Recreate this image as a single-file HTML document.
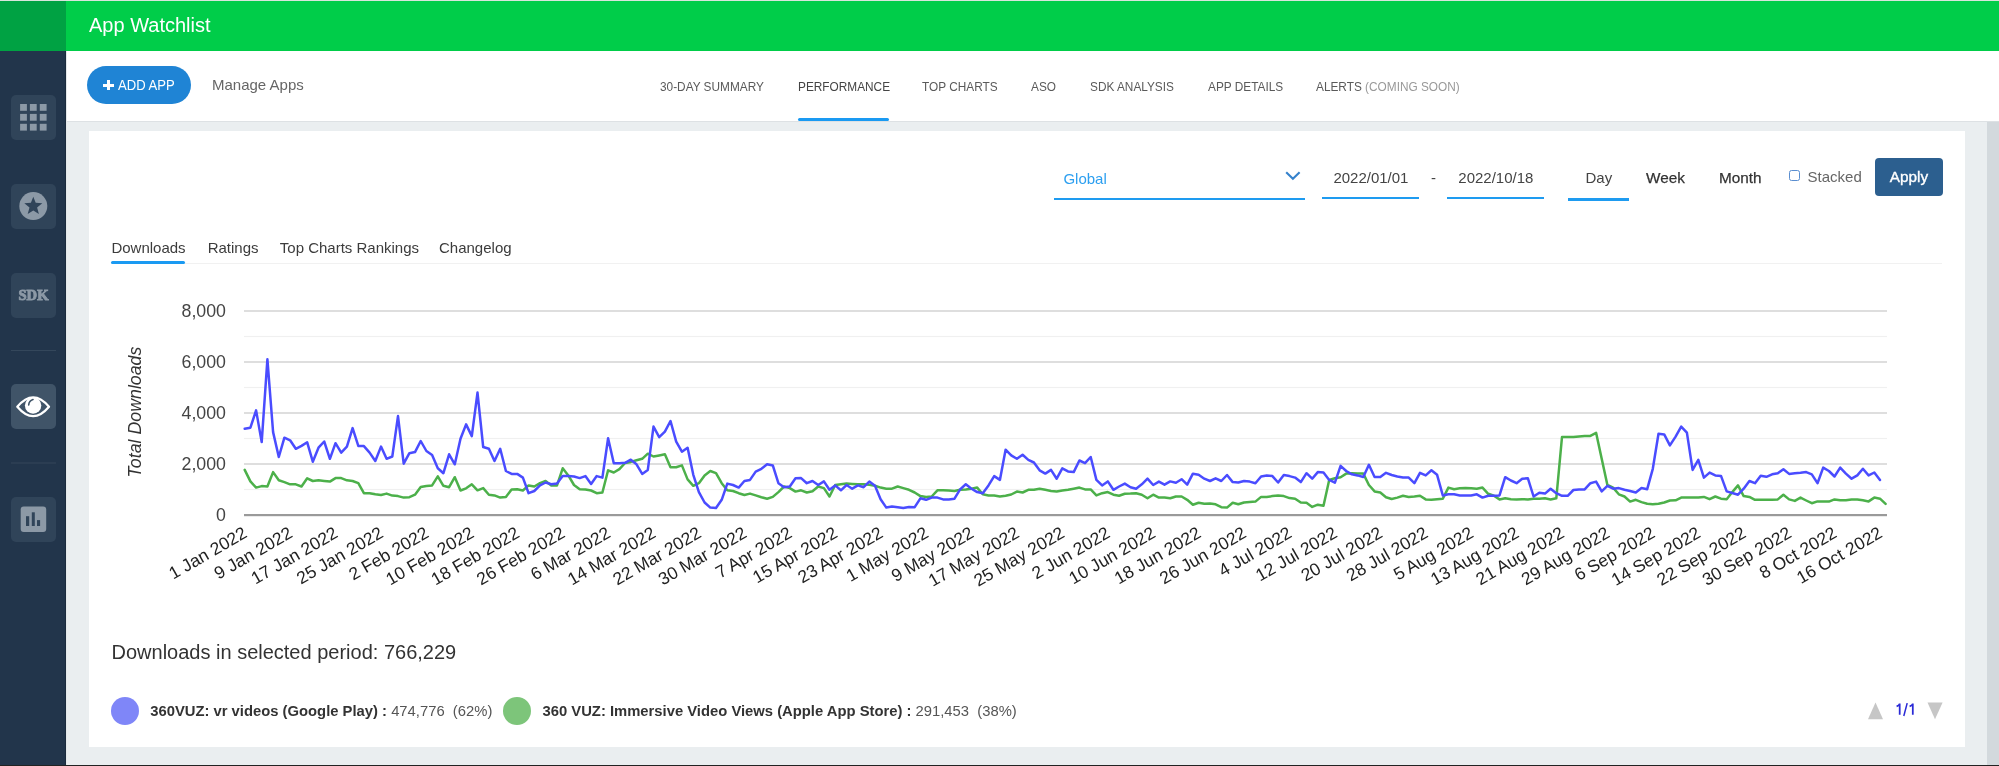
<!DOCTYPE html>
<html><head><meta charset="utf-8">
<style>
html,body{margin:0;padding:0}
body{width:1999px;height:766px;overflow:hidden;position:relative;will-change:transform;background:#eaeef0;font-family:"Liberation Sans",sans-serif;color:#333}
.a{position:absolute}
.t{position:absolute;line-height:1;white-space:nowrap}
.nv{transform:scaleX(0.91);transform-origin:0 0}
</style></head><body>
<!-- top line and header -->
<div class="a" style="left:0;top:0;width:1999px;height:1px;background:#d9e5dc"></div>
<div class="a" style="left:0;top:1px;width:66px;height:50px;background:#00a243"></div>
<div class="a" style="left:66px;top:1px;width:1933px;height:50px;background:#00cd49"></div>
<div class="t" style="left:89px;top:15px;font-size:20px;color:#fff">App Watchlist</div>
<!-- sidebar -->
<div class="a" style="left:0;top:51px;width:66px;height:715px;background:#22354b"></div>
<div class="a" style="left:65px;top:51px;width:1px;height:715px;background:#1b2b3d"></div>
<!-- nav bar -->
<div class="a" style="left:66px;top:51px;width:1933px;height:70px;background:#fff"></div>
<div class="a" style="left:66px;top:121px;width:1933px;height:1px;background:#dde1e4"></div>
<div class="a" style="left:66px;top:51px;width:1px;height:715px;background:#e4e8ea"></div>
<!-- scrollbar -->
<div class="a" style="left:1987px;top:122px;width:12px;height:644px;background:#d3d9dd"></div>
<div class="a" style="left:0;top:765px;width:1999px;height:1px;background:#222"></div>
<!-- card -->
<div class="a" style="left:89px;top:131px;width:1876px;height:616px;background:#fff"></div>

<!-- sidebar icons -->
<svg class="a" style="left:0;top:0" width="66" height="766">
  <rect x="11" y="95" width="45" height="45" rx="5" fill="#304459"/>
  <g fill="#8c99a6">
    <rect x="20.1" y="104" width="6.8" height="6.8"/><rect x="29.9" y="104" width="6.8" height="6.8"/><rect x="39.8" y="104" width="6.8" height="6.8"/>
    <rect x="20.1" y="113.9" width="6.8" height="6.8"/><rect x="29.9" y="113.9" width="6.8" height="6.8"/><rect x="39.8" y="113.9" width="6.8" height="6.8"/>
    <rect x="20.1" y="123.8" width="6.8" height="6.8"/><rect x="29.9" y="123.8" width="6.8" height="6.8"/><rect x="39.8" y="123.8" width="6.8" height="6.8"/>
  </g>
  <rect x="11" y="184" width="45" height="45" rx="5" fill="#304459"/>
  <circle cx="33.3" cy="206.1" r="14" fill="#8c99a6"/>
  <polygon fill="#304459" points="33.3,196.7 35.7,202.8 42.3,203.3 37.1,207.6 38.9,214.1 33.3,210.4 27.7,214.1 29.5,207.6 24.3,203.3 30.9,202.8"/>
  <rect x="11" y="273" width="45" height="45" rx="5" fill="#304459"/>
  <text x="33.5" y="299.7" text-anchor="middle" font-family="Liberation Serif" font-weight="bold" font-size="14.5" fill="#8c99a6" stroke="#8c99a6" stroke-width="0.9" textLength="30" lengthAdjust="spacingAndGlyphs">SDK</text>
  <rect x="11" y="350" width="45" height="1" fill="#34475b"/>
  <rect x="11" y="384" width="45" height="45" rx="5" fill="#405468"/>
  <path d="M17.3,406.8 Q33.2,388 49,406.8 Q33.2,425.6 17.3,406.8 Z" fill="none" stroke="#fff" stroke-width="2.3" stroke-linejoin="round"/>
  <circle cx="33.1" cy="405.5" r="8.2" fill="#fff"/>
  <path d="M28.7,405 Q29,400.8 33,399.6" fill="none" stroke="#405468" stroke-width="1.6" stroke-linecap="round"/>
  <rect x="11" y="462.5" width="45" height="1" fill="#34475b"/>
  <rect x="11" y="497" width="45" height="45" rx="5" fill="#304459"/>
  <rect x="20.7" y="506.4" width="25.5" height="25.5" rx="3" fill="#8c99a6"/>
  <g fill="#304459"><rect x="26" y="516.2" width="3.2" height="9.8"/><rect x="31.8" y="512.3" width="3" height="13.7"/><rect x="37" y="520.1" width="3.1" height="5.9"/></g>
</svg>

<!-- nav -->
<div class="a" style="left:87px;top:66px;width:104px;height:37.5px;border-radius:19px;background:#1f84d5"></div>
<div class="a" style="left:103px;top:83.7px;width:10.8px;height:3px;background:#fff"></div>
<div class="a" style="left:106.9px;top:80px;width:3px;height:10.4px;background:#fff"></div>
<div class="t" style="left:118.3px;top:78.3px;font-size:14px;color:#fff;transform:scaleX(0.935);transform-origin:0 0">ADD APP</div>
<div class="t" style="left:212px;top:76.9px;font-size:15px;color:#666">Manage Apps</div>

<div class="t nv" style="left:660px;top:80.4px;font-size:13px;color:#5a5a5a">30-DAY SUMMARY</div>
<div class="t nv" style="left:798px;top:80.4px;font-size:13px;color:#444">PERFORMANCE</div>
<div class="a" style="left:798px;top:118px;width:91px;height:3px;border-radius:1.5px;background:#1a9af2"></div>
<div class="t nv" style="left:922.4px;top:80.4px;font-size:13px;color:#5a5a5a">TOP CHARTS</div>
<div class="t nv" style="left:1031px;top:80.4px;font-size:13px;color:#5a5a5a">ASO</div>
<div class="t nv" style="left:1089.5px;top:80.4px;font-size:13px;color:#5a5a5a">SDK ANALYSIS</div>
<div class="t nv" style="left:1208px;top:80.4px;font-size:13px;color:#5a5a5a">APP DETAILS</div>
<div class="t nv" style="left:1316px;top:80.4px;font-size:13px;color:#5a5a5a">ALERTS <span style="color:#999">(COMING SOON)</span></div>

<!-- filter row -->
<div class="t" style="left:1063.4px;top:171.2px;font-size:15px;color:#2c9ff0">Global</div>
<div class="a" style="left:1054px;top:198px;width:251px;height:2px;background:#1e9bf0"></div>
<svg class="a" style="left:1284px;top:168px" width="18" height="16"><path d="M2.2,4.2 L8.9,10.8 L15.6,4.2" fill="none" stroke="#3582cc" stroke-width="2.1"/></svg>
<div class="t" style="left:1333.4px;top:170.3px;font-size:15px;color:#444">2022/01/01</div>
<div class="a" style="left:1322px;top:197px;width:97px;height:2px;background:#1e9bf0"></div>
<div class="t" style="left:1431px;top:170px;font-size:15px;color:#444">-</div>
<div class="t" style="left:1458.3px;top:170.3px;font-size:15px;color:#444">2022/10/18</div>
<div class="a" style="left:1447px;top:197px;width:97px;height:2px;background:#1e9bf0"></div>
<div class="t" style="left:1585.5px;top:170.4px;font-size:15px;color:#444">Day</div>
<div class="a" style="left:1568px;top:198px;width:61px;height:2.5px;background:#1e9bf0"></div>
<div class="t" style="left:1646px;top:170.4px;font-size:15.3px;color:#333;-webkit-text-stroke:0.25px #333">Week</div>
<div class="t" style="left:1719px;top:170.4px;font-size:15.3px;color:#333;-webkit-text-stroke:0.25px #333">Month</div>
<div class="a" style="left:1789px;top:170.4px;width:8.7px;height:8.5px;border:1.5px solid #5a8ed0;border-radius:2.5px"></div>
<div class="t" style="left:1807.6px;top:169.3px;font-size:15px;color:#666">Stacked</div>
<div class="a" style="left:1875px;top:158px;width:68px;height:38px;border-radius:4px;background:#2c5f8f"></div>
<div class="t" style="left:1889.8px;top:168.8px;font-size:15.3px;color:#fff;-webkit-text-stroke:0.35px #fff">Apply</div>

<!-- chart tabs -->
<div class="t" style="left:111.4px;top:240.4px;font-size:15px;color:#3c3c3c">Downloads</div>
<div class="t" style="left:207.7px;top:240.4px;font-size:15px;color:#3c3c3c">Ratings</div>
<div class="t" style="left:279.8px;top:240.4px;font-size:15px;color:#3c3c3c">Top Charts Rankings</div>
<div class="t" style="left:439px;top:240.4px;font-size:15px;color:#3c3c3c">Changelog</div>
<div class="a" style="left:111px;top:263px;width:1831px;height:1px;background:#f1f1f1"></div>
<div class="a" style="left:111px;top:260.5px;width:74px;height:3px;border-radius:1.5px;background:#1a9af2"></div>

<!-- chart -->
<svg class="a" style="left:0;top:0" width="1999" height="766" font-family="Liberation Sans">
<rect x="244" y="335.9" width="1643" height="1.2" fill="#f0f0f0"/>
<rect x="244" y="386.9" width="1643" height="1.2" fill="#f0f0f0"/>
<rect x="244" y="437.9" width="1643" height="1.2" fill="#f0f0f0"/>
<rect x="244" y="488.9" width="1643" height="1.2" fill="#f0f0f0"/>
<rect x="244" y="310.0" width="1643" height="2" fill="#dedede"/>
<rect x="244" y="361.0" width="1643" height="2" fill="#dedede"/>
<rect x="244" y="412.0" width="1643" height="2" fill="#dedede"/>
<rect x="244" y="463.0" width="1643" height="2" fill="#dedede"/>
<rect x="244" y="514" width="1643" height="2.2" fill="#9a9a9a"/>
<g font-size="17.8" fill="#444">
<text x="226" y="317.3" text-anchor="end">8,000</text>
<text x="226" y="368.3" text-anchor="end">6,000</text>
<text x="226" y="419.3" text-anchor="end">4,000</text>
<text x="226" y="470.3" text-anchor="end">2,000</text>
<text x="226" y="521.3" text-anchor="end">0</text>
</g>
<text transform="translate(140.5,412) rotate(-90)" text-anchor="middle" font-size="17.8" font-style="italic" fill="#333">Total Downloads</text>
<polyline points="244.7,469.9 250.4,481.4 256.1,487.6 261.7,486.1 267.4,486.5 273.1,472.1 278.8,480.3 284.4,482.1 290.1,484.3 295.8,484.3 301.5,486.5 307.2,478.3 312.8,481.0 318.5,480.3 324.2,481.0 329.9,481.6 335.5,478.1 341.2,478.1 346.9,480.3 352.6,481.0 358.3,483.2 363.9,493.2 369.6,493.2 375.3,494.3 381.0,495.0 386.6,493.6 392.3,495.6 398.0,496.1 403.7,497.6 409.4,497.2 415.0,494.7 420.7,487.0 426.4,485.9 432.1,485.4 437.8,476.3 443.4,485.8 449.1,487.2 454.8,477.2 460.5,490.5 466.1,488.3 471.8,484.3 477.5,490.3 483.2,488.1 488.9,494.7 494.5,495.4 500.2,497.6 505.9,496.9 511.6,489.4 517.2,489.2 522.9,490.5 528.6,485.4 534.3,486.5 540.0,483.2 545.6,481.0 551.3,485.4 557.0,485.4 562.7,468.3 568.3,475.4 574.0,485.0 579.7,489.2 585.4,489.4 591.1,490.5 596.7,493.2 602.4,492.5 608.1,470.3 613.8,472.5 619.4,469.2 625.1,463.0 630.8,461.9 636.5,460.3 642.2,458.8 647.8,453.7 653.5,456.5 659.2,455.4 664.9,454.3 670.5,467.2 676.2,467.2 681.9,465.4 687.6,479.4 693.3,485.8 698.9,483.2 704.6,475.4 710.3,471.0 716.0,473.2 721.7,483.2 727.3,490.3 733.0,491.0 738.7,493.2 744.4,495.0 750.0,493.6 755.7,495.4 761.4,497.2 767.1,498.7 772.8,496.9 778.4,492.1 784.1,486.5 789.8,488.1 795.5,491.6 801.1,490.3 806.8,492.5 812.5,491.2 818.2,486.5 823.9,488.1 829.5,496.5 835.2,485.0 840.9,484.3 846.6,483.6 852.2,483.9 857.9,484.3 863.6,484.3 869.3,484.7 875.0,485.8 880.6,487.6 886.3,488.7 892.0,488.7 897.7,486.5 903.3,488.1 909.0,489.8 914.7,492.5 920.4,496.1 926.1,496.9 931.7,496.5 937.4,490.3 943.1,490.3 948.8,490.5 954.5,491.0 960.1,489.8 965.8,489.4 971.5,488.7 977.2,487.6 982.8,494.3 988.5,495.4 994.2,495.4 999.9,496.5 1005.6,495.8 1011.2,494.5 1016.9,491.6 1022.6,492.5 1028.3,489.8 1033.9,489.8 1039.6,488.7 1045.3,489.8 1051.0,491.0 1056.7,491.6 1062.3,490.5 1068.0,489.8 1073.7,488.7 1079.4,487.6 1085.0,489.4 1090.7,489.4 1096.4,495.4 1102.1,493.2 1107.8,492.1 1113.4,494.7 1119.1,495.8 1124.8,493.8 1130.5,493.6 1136.1,493.2 1141.8,494.7 1147.5,498.3 1153.2,494.7 1158.9,497.6 1164.5,497.6 1170.2,498.3 1175.9,496.5 1181.6,496.5 1187.2,499.8 1192.9,504.7 1198.6,502.7 1204.3,503.8 1210.0,503.6 1215.6,504.3 1221.3,507.2 1227.0,507.6 1232.7,502.7 1238.3,504.3 1244.0,502.5 1249.7,502.1 1255.4,501.6 1261.1,496.9 1266.7,496.9 1272.4,496.1 1278.1,495.4 1283.8,496.1 1289.5,498.1 1295.1,498.7 1300.8,502.5 1306.5,502.7 1312.2,506.9 1317.8,504.7 1323.5,505.8 1329.2,479.9 1334.9,478.3 1340.6,477.2 1346.2,473.6 1351.9,473.2 1357.6,473.6 1363.3,473.6 1368.9,485.0 1374.6,491.4 1380.3,492.5 1386.0,497.2 1391.7,499.0 1397.3,497.6 1403.0,495.8 1408.7,496.9 1414.4,496.5 1420.0,495.8 1425.7,499.4 1431.4,499.8 1437.1,499.2 1442.8,498.7 1448.4,487.6 1454.1,489.2 1459.8,488.3 1465.5,488.1 1471.1,488.3 1476.8,488.7 1482.5,487.6 1488.2,493.8 1493.9,495.8 1499.5,499.4 1505.2,498.3 1510.9,499.2 1516.6,499.4 1522.2,499.2 1527.9,499.4 1533.6,498.7 1539.3,498.7 1545.0,498.3 1550.6,499.4 1556.3,498.3 1562.0,437.0 1567.7,437.0 1573.4,437.0 1579.0,436.6 1584.7,436.1 1590.4,435.9 1596.1,432.8 1601.7,458.8 1607.4,485.0 1613.1,487.6 1618.8,494.3 1624.5,496.5 1630.1,501.6 1635.8,499.8 1641.5,502.1 1647.2,503.8 1652.8,504.3 1658.5,503.8 1664.2,502.5 1669.9,500.5 1675.6,500.3 1681.2,497.6 1686.9,497.6 1692.6,497.6 1698.3,497.6 1703.9,496.9 1709.6,499.2 1715.3,496.5 1721.0,498.7 1726.7,499.2 1732.3,492.1 1738.0,485.4 1743.7,496.1 1749.4,496.9 1755.0,499.8 1760.7,499.8 1766.4,499.8 1772.1,499.8 1777.8,499.4 1783.4,494.7 1789.1,499.4 1794.8,500.9 1800.5,497.6 1806.2,500.5 1811.8,503.2 1817.5,501.4 1823.2,501.6 1828.9,501.6 1834.5,499.4 1840.2,500.3 1845.9,500.3 1851.6,499.4 1857.3,499.4 1862.9,500.3 1868.6,501.4 1874.3,497.6 1880.0,498.7 1885.6,503.8" fill="none" stroke="#4cb04a" stroke-width="2.5" stroke-linejoin="round" stroke-linecap="round"/>
<polyline points="244.7,428.8 250.4,427.7 256.1,410.4 261.7,442.1 267.4,359.3 273.1,432.1 278.8,457.0 284.4,437.7 290.1,440.3 295.8,448.8 301.5,445.9 307.2,442.3 312.8,461.7 318.5,447.7 324.2,441.5 329.9,458.8 335.5,443.2 341.2,452.6 346.9,446.6 352.6,428.1 358.3,445.9 363.9,446.1 369.6,452.6 375.3,461.0 381.0,446.6 386.6,458.8 392.3,456.5 398.0,416.1 403.7,463.7 409.4,453.2 415.0,452.1 420.7,441.0 426.4,451.0 432.1,455.0 437.8,468.2 443.4,473.2 449.1,454.3 454.8,464.3 460.5,438.8 466.1,424.4 471.8,436.1 477.5,392.6 483.2,447.0 488.9,448.8 494.5,461.0 500.2,448.8 505.9,471.0 511.6,473.9 517.2,473.9 522.9,477.6 528.6,493.2 534.3,491.0 540.0,485.4 545.6,482.5 551.3,484.3 557.0,483.6 562.7,476.1 568.3,476.1 574.0,476.5 579.7,478.1 585.4,476.1 591.1,483.9 596.7,476.1 602.4,477.6 608.1,438.3 613.8,463.2 619.4,463.2 625.1,462.8 630.8,459.7 636.5,464.3 642.2,473.9 647.8,469.9 653.5,426.6 659.2,437.2 664.9,431.7 670.5,421.0 676.2,441.7 681.9,451.7 687.6,447.7 693.3,474.8 698.9,492.1 704.6,502.5 710.3,507.6 716.0,508.0 721.7,499.8 727.3,483.6 733.0,485.0 738.7,487.6 744.4,481.0 750.0,479.9 755.7,471.6 761.4,468.8 767.1,464.3 772.8,465.4 778.4,483.2 784.1,487.2 789.8,486.5 795.5,478.3 801.1,478.1 806.8,483.2 812.5,481.0 818.2,485.0 823.9,481.4 829.5,489.8 835.2,485.4 840.9,490.3 846.6,485.0 852.2,488.7 857.9,485.4 863.6,487.2 869.3,481.6 875.0,485.8 880.6,499.2 886.3,507.6 892.0,506.5 897.7,507.2 903.3,508.0 909.0,506.9 914.7,507.2 920.4,498.3 926.1,499.8 931.7,497.6 937.4,497.6 943.1,499.4 948.8,499.4 954.5,498.7 960.1,489.4 965.8,484.3 971.5,488.7 977.2,492.1 982.8,493.2 988.5,485.4 994.2,476.1 999.9,479.9 1005.6,449.7 1011.2,455.4 1016.9,458.8 1022.6,454.8 1028.3,459.9 1033.9,462.5 1039.6,470.3 1045.3,473.6 1051.0,469.9 1056.7,478.7 1062.3,468.3 1068.0,471.4 1073.7,472.1 1079.4,460.5 1085.0,463.2 1090.7,457.0 1096.4,479.9 1102.1,485.4 1107.8,481.4 1113.4,489.8 1119.1,486.5 1124.8,483.6 1130.5,487.2 1136.1,488.7 1141.8,484.3 1147.5,478.7 1153.2,485.0 1158.9,481.6 1164.5,484.7 1170.2,481.4 1175.9,482.7 1181.6,479.2 1187.2,484.7 1192.9,473.7 1198.6,474.8 1204.3,478.7 1210.0,481.0 1215.6,478.3 1221.3,481.0 1227.0,475.0 1232.7,482.1 1238.3,482.5 1244.0,481.0 1249.7,481.6 1255.4,483.2 1261.1,476.5 1266.7,475.4 1272.4,476.1 1278.1,482.5 1283.8,475.0 1289.5,476.1 1295.1,477.6 1300.8,482.1 1306.5,473.2 1312.2,478.7 1317.8,472.1 1323.5,472.5 1329.2,479.9 1334.9,482.7 1340.6,465.9 1346.2,471.0 1351.9,474.3 1357.6,475.4 1363.3,477.0 1368.9,464.8 1374.6,477.0 1380.3,477.0 1386.0,472.8 1391.7,475.0 1397.3,476.5 1403.0,477.6 1408.7,477.6 1414.4,483.2 1420.0,472.8 1425.7,475.4 1431.4,470.3 1437.1,474.8 1442.8,495.4 1448.4,494.3 1454.1,494.3 1459.8,495.4 1465.5,495.4 1471.1,495.4 1476.8,494.3 1482.5,497.6 1488.2,495.8 1493.9,495.8 1499.5,495.4 1505.2,477.2 1510.9,480.5 1516.6,483.2 1522.2,478.7 1527.9,478.3 1533.6,496.5 1539.3,492.7 1545.0,493.6 1550.6,488.7 1556.3,493.2 1562.0,495.8 1567.7,495.8 1573.4,490.0 1579.0,489.4 1584.7,489.4 1590.4,483.2 1596.1,481.6 1601.7,491.4 1607.4,485.8 1613.1,488.7 1618.8,488.1 1624.5,489.8 1630.1,491.0 1635.8,492.5 1641.5,488.1 1647.2,489.2 1652.8,468.8 1658.5,433.7 1664.2,434.4 1669.9,445.4 1675.6,436.6 1681.2,426.6 1686.9,432.6 1692.6,469.9 1698.3,459.9 1703.9,477.6 1709.6,472.6 1715.3,475.4 1721.0,475.9 1726.7,491.4 1732.3,493.0 1738.0,494.7 1743.7,488.7 1749.4,481.0 1755.0,483.2 1760.7,475.7 1766.4,476.8 1772.1,474.3 1777.8,473.2 1783.4,469.2 1789.1,473.9 1794.8,473.2 1800.5,472.8 1806.2,472.1 1811.8,474.3 1817.5,483.2 1823.2,467.6 1828.9,471.0 1834.5,476.5 1840.2,467.6 1845.9,473.6 1851.6,478.7 1857.3,475.4 1862.9,468.8 1868.6,475.4 1874.3,472.5 1880.0,479.9" fill="none" stroke="#4a4cff" stroke-width="2.5" stroke-linejoin="round" stroke-linecap="round"/>
<g font-size="17.5" fill="#222">
<text transform="translate(248.2,536.5) rotate(-30)" text-anchor="end">1 Jan 2022</text>
<text transform="translate(293.6,536.5) rotate(-30)" text-anchor="end">9 Jan 2022</text>
<text transform="translate(339.0,536.5) rotate(-30)" text-anchor="end">17 Jan 2022</text>
<text transform="translate(384.5,536.5) rotate(-30)" text-anchor="end">25 Jan 2022</text>
<text transform="translate(429.9,536.5) rotate(-30)" text-anchor="end">2 Feb 2022</text>
<text transform="translate(475.3,536.5) rotate(-30)" text-anchor="end">10 Feb 2022</text>
<text transform="translate(520.7,536.5) rotate(-30)" text-anchor="end">18 Feb 2022</text>
<text transform="translate(566.2,536.5) rotate(-30)" text-anchor="end">26 Feb 2022</text>
<text transform="translate(611.6,536.5) rotate(-30)" text-anchor="end">6 Mar 2022</text>
<text transform="translate(657.0,536.5) rotate(-30)" text-anchor="end">14 Mar 2022</text>
<text transform="translate(702.4,536.5) rotate(-30)" text-anchor="end">22 Mar 2022</text>
<text transform="translate(747.9,536.5) rotate(-30)" text-anchor="end">30 Mar 2022</text>
<text transform="translate(793.3,536.5) rotate(-30)" text-anchor="end">7 Apr 2022</text>
<text transform="translate(838.7,536.5) rotate(-30)" text-anchor="end">15 Apr 2022</text>
<text transform="translate(884.1,536.5) rotate(-30)" text-anchor="end">23 Apr 2022</text>
<text transform="translate(929.6,536.5) rotate(-30)" text-anchor="end">1 May 2022</text>
<text transform="translate(975.0,536.5) rotate(-30)" text-anchor="end">9 May 2022</text>
<text transform="translate(1020.4,536.5) rotate(-30)" text-anchor="end">17 May 2022</text>
<text transform="translate(1065.8,536.5) rotate(-30)" text-anchor="end">25 May 2022</text>
<text transform="translate(1111.3,536.5) rotate(-30)" text-anchor="end">2 Jun 2022</text>
<text transform="translate(1156.7,536.5) rotate(-30)" text-anchor="end">10 Jun 2022</text>
<text transform="translate(1202.1,536.5) rotate(-30)" text-anchor="end">18 Jun 2022</text>
<text transform="translate(1247.5,536.5) rotate(-30)" text-anchor="end">26 Jun 2022</text>
<text transform="translate(1293.0,536.5) rotate(-30)" text-anchor="end">4 Jul 2022</text>
<text transform="translate(1338.4,536.5) rotate(-30)" text-anchor="end">12 Jul 2022</text>
<text transform="translate(1383.8,536.5) rotate(-30)" text-anchor="end">20 Jul 2022</text>
<text transform="translate(1429.2,536.5) rotate(-30)" text-anchor="end">28 Jul 2022</text>
<text transform="translate(1474.6,536.5) rotate(-30)" text-anchor="end">5 Aug 2022</text>
<text transform="translate(1520.1,536.5) rotate(-30)" text-anchor="end">13 Aug 2022</text>
<text transform="translate(1565.5,536.5) rotate(-30)" text-anchor="end">21 Aug 2022</text>
<text transform="translate(1610.9,536.5) rotate(-30)" text-anchor="end">29 Aug 2022</text>
<text transform="translate(1656.3,536.5) rotate(-30)" text-anchor="end">6 Sep 2022</text>
<text transform="translate(1701.8,536.5) rotate(-30)" text-anchor="end">14 Sep 2022</text>
<text transform="translate(1747.2,536.5) rotate(-30)" text-anchor="end">22 Sep 2022</text>
<text transform="translate(1792.6,536.5) rotate(-30)" text-anchor="end">30 Sep 2022</text>
<text transform="translate(1838.0,536.5) rotate(-30)" text-anchor="end">8 Oct 2022</text>
<text transform="translate(1883.5,536.5) rotate(-30)" text-anchor="end">16 Oct 2022</text>
</g>
</svg>

<!-- summary + legend -->
<div class="t" style="left:111.5px;top:641.9px;font-size:20px;color:#333">Downloads in selected period: 766,229</div>
<div class="a" style="left:111px;top:697px;width:28px;height:28px;border-radius:50%;background:#7f86f8"></div>
<div class="t" style="left:150.2px;top:704.2px;font-size:14.8px;color:#333"><b>360VUZ: vr videos (Google Play) :</b> <span style="color:#555">474,776&nbsp; (62%)</span></div>
<div class="a" style="left:503px;top:697px;width:28px;height:28px;border-radius:50%;background:#7dc57a"></div>
<div class="t" style="left:542.5px;top:704.2px;font-size:14.8px;color:#333"><b>360 VUZ: Immersive Video Views (Apple App Store) :</b> <span style="color:#555">291,453&nbsp; (38%)</span></div>
<svg class="a" style="left:1860px;top:695px" width="90" height="30">
  <polygon points="8,24.2 15.5,7.5 23,24.2" fill="#c6c6c6"/>
  <polygon points="67.5,7.5 82.6,7.5 75,24.2" fill="#c6c6c6"/>
</svg>
<svg class="a" style="left:1890px;top:700px" width="30" height="20"><g fill="none" stroke="#2a2ad6" stroke-width="1.75" stroke-linecap="butt"><path d="M6.6,6.3 Q9.3,5.5 9.7,3.6 L9.7,14.8"/><path d="M13.8,16 L17.2,3.1" stroke-width="1.5"/><path d="M19.6,6.3 Q22.3,5.5 22.8,3.6 L22.8,14.8"/></g></svg>
</body></html>
